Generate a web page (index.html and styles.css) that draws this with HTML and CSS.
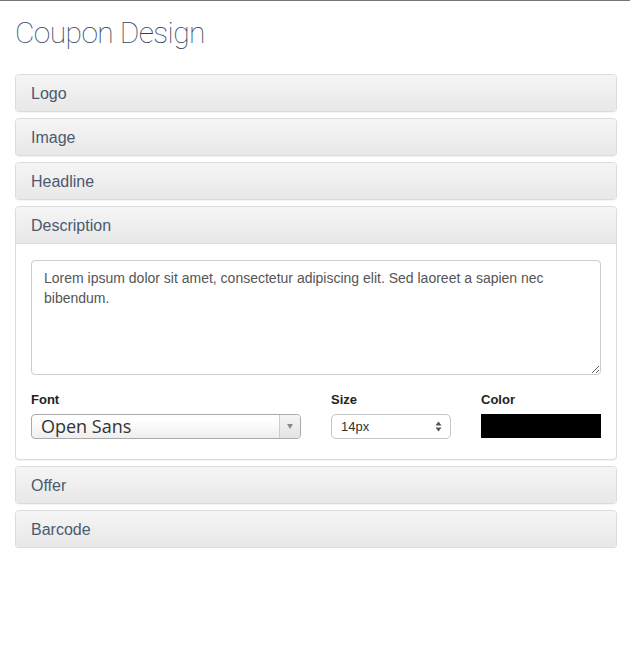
FILE: index.html
```html
<!DOCTYPE html>
<html lang="en">
<head>
    <meta charset="UTF-8">
    <title>Coupon Design</title>
    <link rel="stylesheet" href="styles.css">
</head>
<body>
    <div class="page">
        <h1 class="title">Coupon Design</h1>

        <div class="panel-group">
            <div class="panel"><div class="panel-heading">Logo</div></div>
            <div class="panel"><div class="panel-heading">Image</div></div>
            <div class="panel"><div class="panel-heading">Headline</div></div>
            <div class="panel open">
                <div class="panel-heading">Description</div>
                <div class="panel-body">
                    <textarea class="desc-input">Lorem ipsum dolor sit amet, consectetur adipiscing elit. Sed laoreet a sapien nec bibendum.</textarea>
                    <div class="field-row">
                        <div class="field field-font">
                            <label>Font</label>
                            <div class="font-select">
                                <span class="font-value">Open Sans</span>
                                <span class="font-arrow"><span class="tri"></span></span>
                            </div>
                        </div>
                        <div class="field field-size">
                            <label>Size</label>
                            <div class="size-select">
                                <span>14px</span>
                                <svg width="7" height="11" viewBox="0 0 7 11">
                                    <path d="M3.5 0.5 L6.5 4.5 L0.5 4.5 Z" fill="#555"/>
                                    <path d="M3.5 10.5 L6.5 6.5 L0.5 6.5 Z" fill="#555"/>
                                </svg>
                            </div>
                        </div>
                        <div class="field field-color">
                            <label>Color</label>
                            <div class="color-swatch"></div>
                        </div>
                    </div>
                </div>
            </div>
            <div class="panel"><div class="panel-heading">Offer</div></div>
            <div class="panel"><div class="panel-heading">Barcode</div></div>
        </div>
    </div>
</body>
</html>
```

FILE: styles.css
```css
body {
    margin: 0;
    padding: 0;
    background-color: #fff;
    font-family: 'Liberation Sans', Arial, sans-serif;
    border-top: 1px solid #777;
}

.page {
    padding: 0 13px 0 15px;
}

.title {
    margin: 16px 0 25px;
    font-family: Roboto, 'Liberation Sans', sans-serif;
    font-weight: 100;
    font-size: 30px;
    line-height: 32px;
    color: #2c3e58;
    letter-spacing: -0.6px;
}

.panel-group {
    display: flex;
    flex-direction: column;
    gap: 6px;
}

.panel {
    border: 1px solid #dcdcdc;
    border-radius: 4px;
    background-color: #fff;
    box-shadow: 0 1px 1px rgba(0, 0, 0, 0.05);
}

.panel-heading {
    padding: 0 15px;
    height: 36px;
    line-height: 37px;
    font-size: 16px;
    color: #4a5a70;
    background: linear-gradient(#f5f5f5, #e8e8e8);
    border-radius: 3px;
}

.open .panel-heading {
    border-bottom: 1px solid #dcdcdc;
    border-radius: 3px 3px 0 0;
}

.panel-body {
    padding: 16px 15px 20px;
}

.desc-input {
    display: block;
    box-sizing: border-box;
    width: 100%;
    height: 115px;
    padding: 7px 12px;
    border: 1px solid #ccc;
    border-radius: 4px;
    font-family: 'Liberation Sans', Arial, sans-serif;
    font-size: 14px;
    line-height: 20px;
    color: #555;
    resize: vertical;
    outline: none;
}

.field-row {
    display: flex;
    gap: 30px;
    margin-top: 17px;
}

.field label {
    display: block;
    font-size: 13px;
    font-weight: bold;
    color: #222;
    margin-bottom: 7px;
}

.field-font {
    width: 270px;
}

.field-size,
.field-color {
    width: 120px;
}

.font-select {
    display: flex;
    height: 25px;
    box-sizing: border-box;
    border: 1px solid #aaa;
    border-radius: 4px;
    background: linear-gradient(#fff 20%, #eee);
}

.font-value {
    flex-grow: 1;
    padding-left: 9px;
    font-family: 'Open Sans', sans-serif;
    font-size: 18px;
    line-height: 23px;
    color: #333;
}

.font-arrow {
    width: 20px;
    border-left: 1px solid #ccc;
    display: flex;
    align-items: center;
    justify-content: center;
    background: linear-gradient(#f4f4f4, #e4e4e4);
    border-radius: 0 3px 3px 0;
}

.tri {
    width: 0;
    height: 0;
    border-left: 3px solid transparent;
    border-right: 3px solid transparent;
    border-top: 5px solid #888;
}

.size-select {
    display: flex;
    align-items: center;
    justify-content: space-between;
    box-sizing: border-box;
    height: 25px;
    padding: 0 8px 0 9px;
    border: 1px solid #c6c6c6;
    border-radius: 5px;
    background-color: #fff;
    font-size: 13px;
    color: #333;
}

.color-swatch {
    margin-top: 2px;
    height: 24px;
    background-color: #000;
}
```
